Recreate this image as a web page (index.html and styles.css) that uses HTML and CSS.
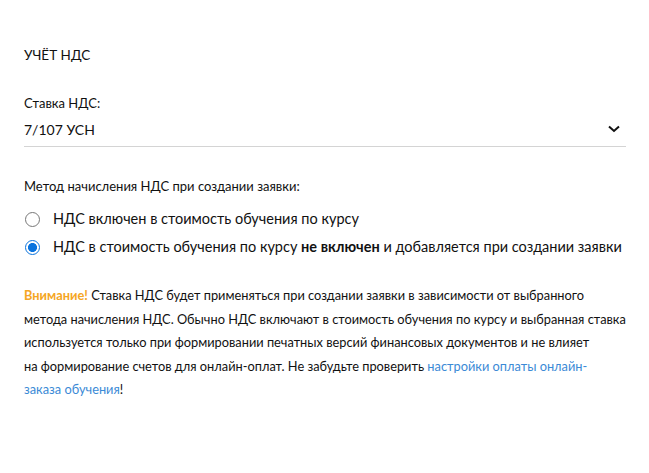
FILE: index.html
```html
<!DOCTYPE html>
<html lang="ru">
<head>
<meta charset="utf-8">
<link rel="stylesheet" href="styles.css">
</head>
<body>
<div class="panel">
  <h2 class="title">УЧЁТ НДС</h2>
  <div class="field">
    <div class="label">Ставка НДС:</div>
    <div class="select">
      <span class="select-value">7/107 УСН</span>
      <svg class="chevron" width="12" height="8" viewBox="0 0 12 8"><path d="M1 1.5 L6 6 L11 1.5" fill="none" stroke="#111" stroke-width="2"/></svg>
    </div>
  </div>
  <div class="method">
    <div class="label">Метод начисления НДС при создании заявки:</div>
    <label class="radio"><span class="circle"></span><span>НДС включен в стоимость обучения по курсу</span></label>
    <label class="radio"><span class="circle checked"></span><span>НДС в стоимость обучения по курсу <b>не включен</b> и добавляется при создании заявки</span></label>
  </div>
  <p class="note"><span class="warn">Внимание!</span> Ставка НДС будет применяться при создании заявки в зависимости от выбранного<br>метода начисления НДС. Обычно НДС включают в стоимость обучения по курсу и выбранная ставка<br>используется только при формировании печатных версий финансовых документов и не влияет<br>на формирование счетов для онлайн-оплат. Не забудьте проверить <a class="link" href="#">настройки оплаты онлайн-<br>заказа обучения</a>!</p>
</div>
</body>
</html>
```
FILE: styles.css
```css
body {
  margin: 0;
  background: #fff;
  font-family: Lato, "Open Sans", sans-serif;
  color: #111;
}
.panel {
  padding: 43px 23px 0 24px;
}
.title {
  margin: 0 0 27px;
  font-size: 13.5px;
  font-weight: 400;
  line-height: 24px;
}
.label {
  font-size: 13px;
  line-height: 18px;
}
.select {
  display: flex;
  align-items: center;
  justify-content: space-between;
  height: 30px;
  border-bottom: 1px solid #d4d4d4;
  margin-top: 4px;
}
.select-value {
  font-size: 14px;
  line-height: 24px;
  margin-top: -2px;
}
.chevron {
  margin-right: 6px;
  margin-top: -4px;
}
.method {
  margin-top: 30px;
}
.method .label {
  margin-bottom: 10px;
}
.radio {
  display: flex;
  align-items: center;
  gap: 13px;
  font-size: 14.5px;
  line-height: 28px;
  white-space: nowrap;
}
.circle {
  width: 13px;
  height: 13px;
  border: 1px solid #777;
  border-radius: 50%;
  margin-left: 1px;
  box-sizing: content-box;
  flex: none;
}
.circle.checked {
  border-color: #0b74de;
  background: radial-gradient(circle, #0b74de 0 4.2px, #fff 4.8px);
}
.note {
  margin: 23px 0 0;
  font-size: 12.8px;
  line-height: 23.5px;
  white-space: nowrap;
}
.warn {
  color: #f5a623;
  font-weight: 700;
}
.link {
  color: #3b8ad6;
  text-decoration: none;
}
```
